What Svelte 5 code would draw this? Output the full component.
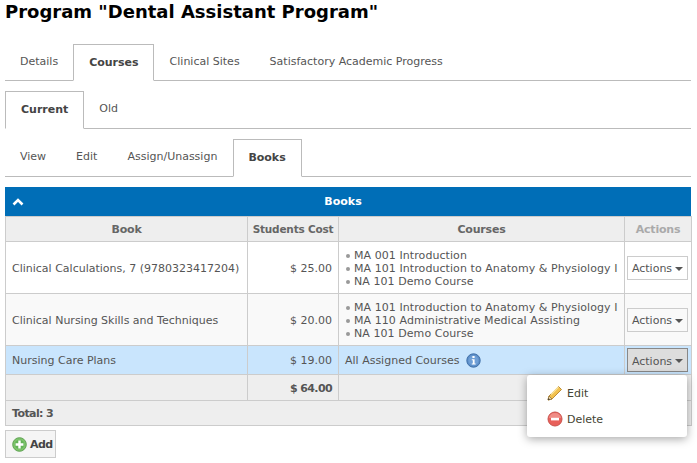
<script>
  const top = ['Details', 'Courses', 'Clinical Sites', 'Satisfactory Academic Progress'];
  const sub = ['Current', 'Old'];
  const third = ['View', 'Edit', 'Assign/Unassign', 'Books'];
  const rows = [
    { book: 'Clinical Calculations, 7 (9780323417204)', cost: '$ 25.00', courses: ['MA 001 Introduction', 'MA 101 Introduction to Anatomy & Physiology I', 'NA 101 Demo Course'] },
    { book: 'Clinical Nursing Skills and Techniques', cost: '$ 20.00', courses: ['MA 101 Introduction to Anatomy & Physiology I', 'MA 110 Administrative Medical Assisting', 'NA 101 Demo Course'], alt: true },
    { book: 'Nursing Care Plans', cost: '$ 19.00', all: true }
  ];
</script>

<div class="page">
  <h1>Program "Dental Assistant Program"</h1>

  <div class="tabs first">
    {#each top as t}<div class="tab" class:active={t === 'Courses'}>{t}</div>{/each}
  </div>
  <div class="tabs second">
    {#each sub as t}<div class="tab" class:active={t === 'Current'}>{t}</div>{/each}
  </div>
  <div class="tabs third">
    {#each third as t}<div class="tab" class:active={t === 'Books'}>{t}</div>{/each}
  </div>

  <div class="bar">
    <svg class="chev" width="12" height="8" viewBox="0 0 12 8"><path d="M1.5 6.5 6 2l4.5 4.5" fill="none" stroke="#fff" stroke-width="2.6"/></svg>
    Books
  </div>

  <div class="tablewrap">
    <table>
      <colgroup><col class="c1" /><col class="c2" /><col class="c3" /><col class="c4" /></colgroup>
      <thead>
        <tr><th>Book</th><th class="sc">Students Cost</th><th>Courses</th><th class="muted">Actions</th></tr>
      </thead>
      <tbody>
        {#each rows as r}
          <tr class:alt={r.alt} class:sel={r.all}>
            <td>{r.book}</td>
            <td class="num">{r.cost}</td>
            <td>
              {#if r.all}
                <span class="allc">All Assigned Courses
                  <svg width="15" height="15" viewBox="0 0 15 15">
                    <circle cx="7.5" cy="7.5" r="6.7" fill="#5d8fc9" stroke="#3f6fa8"/>
                    <circle cx="7.5" cy="7.5" r="5" fill="#6f9fd6"/>
                    <rect x="6.4" y="3" width="2.2" height="2" fill="#fff"/>
                    <path d="M5.8 6.2h2.8v4.2h1v1H5.8v-1h1V7.2h-1z" fill="#fff"/>
                  </svg>
                </span>
              {:else}
                <ul>{#each r.courses as c}<li>{c}</li>{/each}</ul>
              {/if}
            </td>
            <td class="act"><span class="btn" class:pressed={r.all}>Actions <i class="caret"></i></span></td>
          </tr>
        {/each}
        <tr class="sum"><td></td><td class="num b">$ 64.00</td><td></td><td></td></tr>
        <tr class="foot"><td colspan="4"><span class="tot">Total: 3</span></td></tr>
      </tbody>
    </table>

    <div class="menu">
      <div class="item">
        <svg width="16" height="16" viewBox="0 0 16 16">
          <path d="M11.5 1.5 14.5 4.5 5 14 1 15 2 11z" fill="#f2c14e" stroke="#b5832a" stroke-width=".9"/>
          <path d="M2 11 5 14 1 15z" fill="#f4dfb5" stroke="#7a5a20" stroke-width=".6"/>
          <path d="M1 15l.6-2 1.4 1.4z" fill="#333"/>
          <path d="M4 9.5 11.5 2" stroke="#fbe6a2" stroke-width="1.2"/>
        </svg>
        Edit
      </div>
      <div class="item">
        <svg width="16" height="16" viewBox="0 0 16 16">
          <circle cx="8" cy="8" r="7" fill="#e8605a" stroke="#c9524c"/>
          <path d="M2 7a6 5 0 0 1 12 0z" fill="#f08c86"/>
          <rect x="4" y="6.8" width="8" height="2.6" fill="#fff"/>
        </svg>
        Delete
      </div>
    </div>
  </div>

  <div class="add">
    <svg width="15" height="15" viewBox="0 0 15 15">
      <circle cx="7.5" cy="7.5" r="6.8" fill="#7cc36a" stroke="#5fa352"/>
      <circle cx="7.5" cy="7.5" r="4.6" fill="#62b356"/>
      <path d="M6.3 3.6h2.4v2.7h2.7v2.4H8.7v2.7H6.3V8.7H3.6V6.3h2.7z" fill="#fff"/>
    </svg>
    <span class="addl">Add</span>
  </div>
</div>

<style>
  :global(body) { margin: 0; background: #fff; }
  .page {
    font-family: Tahoma, "DejaVu Sans", Verdana, sans-serif;
    font-size: 11px;
    color: #555;
    padding: 0 6px 0 5px;
    width: 686px;
    height: 463px;
    overflow: hidden;
  }
  h1 {
    margin: 0;
    height: 44px;
    font-size: 18px;
    line-height: 24px;
    color: #000;
    font-weight: bold;
  }
  .tabs {
    display: flex;
    border-bottom: 1px solid #bbb;
    height: 37px;
    margin-bottom: 10px;
  }
  .tabs.first { height: 36px; }
  .tab {
    padding: 0 15px;
    line-height: 35px;
    color: #555;
    white-space: nowrap;
  }
  .active {
    border: 1px solid #bbb;
    border-bottom: 1px solid #fff;
    box-sizing: border-box;
    height: calc(100% + 1px);
    font-weight: bold;
    line-height: 36px;
    background: #fff;
    color: #444;
    padding: 0 15px;
  }
  .first .active { padding-right: 14px; margin-right: 1px; }
  .third .active { padding-left: 14px; margin-left: 1px; }
  .bar {
    background: #006eb7;
    color: #fff;
    font-weight: bold;
    height: 29px;
    line-height: 29px;
    text-align: center;
    padding-right: 10px;
    position: relative;
  }
  .chev { position: absolute; left: 7px; top: 11px; }
  .tablewrap { position: relative; }
  table {
    border-collapse: collapse;
    table-layout: fixed;
    width: 686px;
    color: #555;
  }
  .c1 { width: 242px; } .c2 { width: 91px; } .c3 { width: 286px; } .c4 { width: 67px; }
  th, td { border: 1px solid #ccc; padding: 1px 6px 0; }
  th { background: #eee; height: 24px; font-weight: bold; text-align: center; white-space: nowrap; padding: 0; letter-spacing: -.2px; color: #666; }
  th.sc { font-size: 10.5px; }
  th.muted { color: #aaa; }
  tbody tr { height: 52px; }
  .alt td { background: #f9f9f9; }
  .sel td { background: #c9e5fd; }
  tr.sel { height: 29px; }
  tr.sum { height: 26px; }
  tr.sum td, tr.foot td { background: #eee; }
  tr.foot { height: 25px; }
  tr.foot td { font-weight: bold; }
  .tot { letter-spacing: -.6px; }
  .num { text-align: right; }
  .b { font-weight: bold; letter-spacing: -.6px; }
  ul { list-style: none; margin: 0; padding: 0; line-height: 13px; }
  li { position: relative; padding-left: 9px; white-space: nowrap; letter-spacing: .07px; }
  li::before {
    content: '';
    position: absolute;
    left: 1px; top: 5px;
    width: 4px; height: 4px;
    border-radius: 50%;
    background: #999;
  }
  .allc { display: inline-flex; align-items: center; gap: 6px; }
  td.act { padding: 0 3px 0 2px; text-align: center; }
  .btn {
    display: inline-flex;
    align-items: center;
    justify-content: center;
    gap: 3px;
    box-sizing: border-box;
    width: 61px;
    height: 24px;
    padding-top: 2px;
    border: 1px solid #ccc;
    background: #fff;
    color: #555;
  }
  .alt .btn { background: #f9f9f9; }
  .btn.pressed { background: #ddd; border-color: #888; }
  .caret {
    width: 0; height: 0;
    border-left: 4px solid transparent;
    border-right: 4px solid transparent;
    border-top: 4px solid #555;
  }
  .menu {
    position: absolute;
    left: 522px;
    top: 159px;
    width: 160px;
    height: 62px;
    background: #fff;
    border-radius: 3px;
    box-shadow: 0 2px 10px rgba(0, 0, 0, .35);
    padding-top: 5px;
    box-sizing: border-box;
    color: #443;
  }
  .item {
    display: flex;
    align-items: center;
    gap: 4px;
    padding-left: 20px;
    height: 26px;
  }
  .add {
    display: flex;
    align-items: center;
    gap: 3px;
    box-sizing: border-box;
    width: 51px;
    height: 28px;
    margin-top: 4px;
    padding-left: 6px;
    background: #f5f5f5;
    border: 1px solid #ccc;
    font-weight: bold;
    color: #444;
  }
  .addl { letter-spacing: -.6px; }
</style>
